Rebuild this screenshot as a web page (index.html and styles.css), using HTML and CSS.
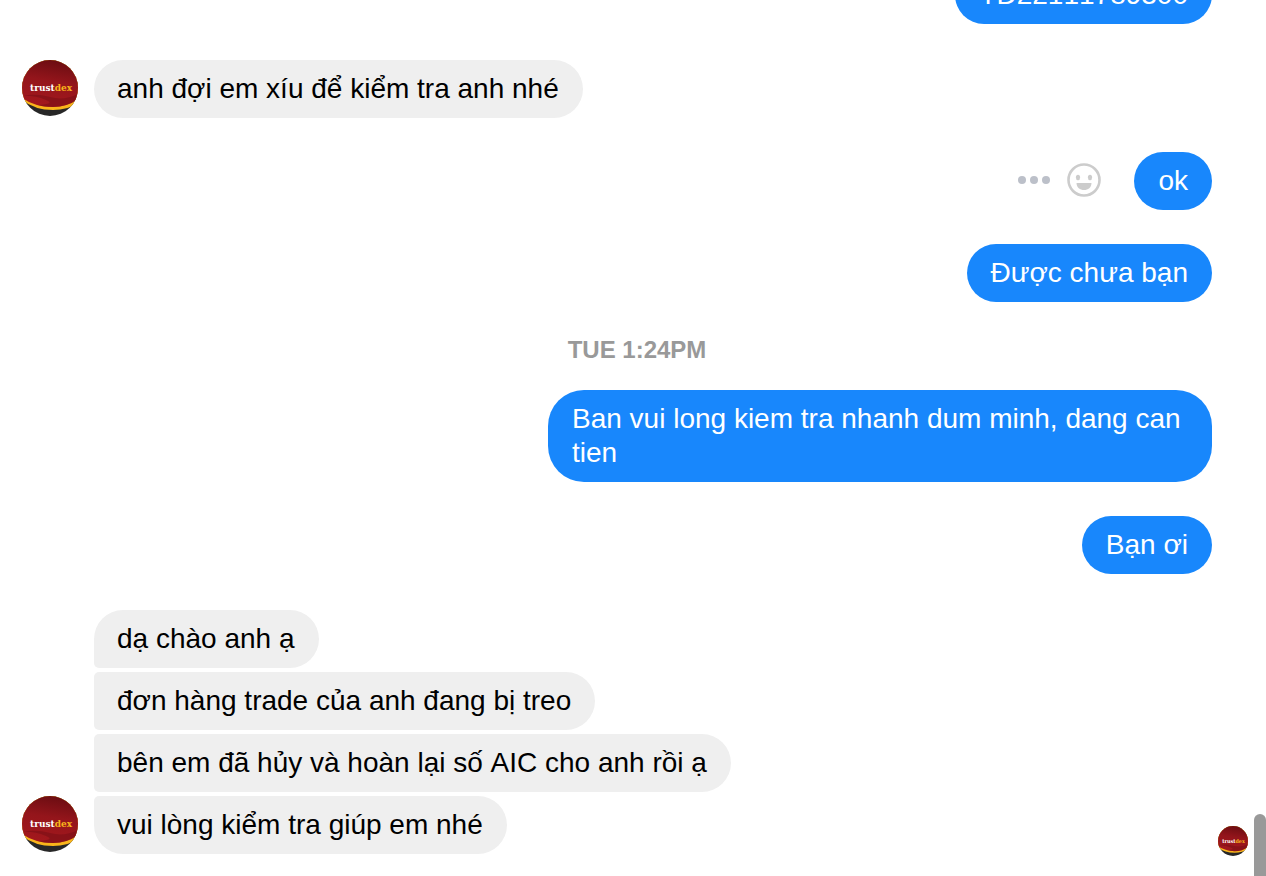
FILE: index.html
```html
<!DOCTYPE html>
<html lang="vi">
<head>
    <meta charset="UTF-8">
    <meta name="viewport" content="width=device-width, initial-scale=1.0">
    <title>Chat</title>
    <link rel="stylesheet" href="styles.css">
</head>
<body>
    <!-- Shared avatar drawing -->
    <svg class="defs" width="0" height="0" aria-hidden="true">
        <defs>
            <linearGradient id="red" x1="0.6" y1="0" x2="0.4" y2="1">
                <stop offset="0" stop-color="#6b0d12"/>
                <stop offset="0.45" stop-color="#94151b"/>
                <stop offset="1" stop-color="#a3181d"/>
            </linearGradient>
            <clipPath id="round"><circle cx="28" cy="28" r="28"/></clipPath>
            <symbol id="avatar" viewBox="0 0 56 56">
                <g clip-path="url(#round)">
                    <rect width="56" height="56" fill="#272727"/>
                    <path d="M0 0H56V43Q46 50 31 50Q13 50 0 40Z" fill="#f9b51b"/>
                    <path d="M0 0H56V39Q45 47 31 47Q13 47 0 38Z" fill="url(#red)"/>
                    <path d="M0 36Q14 33 28 37Q42 41 56 34V39Q45 47 31 47Q22 47 16 45Q34 44 24 40Q12 35 0 36Z" fill="#7a0f15" opacity="0.6"/>
                    <text x="8" y="31" class="brand">trust<tspan class="brand-dex">dex</tspan></text>
                </g>
            </symbol>
        </defs>
    </svg>

    <main class="chat">
        <div class="row mine">
            <p class="bubble">TD22111789300</p>
        </div>

        <div class="row theirs new-sender">
            <svg class="avatar" role="img" aria-label="trustdex"><use href="#avatar"/></svg>
            <p class="bubble">anh đợi em xíu để kiểm tra anh nhé</p>
        </div>

        <div class="row mine">
            <div class="actions">
                <button class="action" type="button" aria-label="More">
                    <svg width="34" height="34" viewBox="0 0 34 34" fill="#bcc0c9">
                        <circle cx="5" cy="17" r="4"/>
                        <circle cx="17" cy="17" r="4"/>
                        <circle cx="29" cy="17" r="4"/>
                    </svg>
                </button>
                <button class="action" type="button" aria-label="React">
                    <svg width="34" height="34" viewBox="0 0 34 34" fill="#cccccc">
                        <circle cx="17" cy="17" r="15.5" fill="none" stroke="#cccccc" stroke-width="2.6"/>
                        <ellipse cx="11" cy="14.5" rx="2.1" ry="2.7"/>
                        <ellipse cx="23" cy="14.5" rx="2.1" ry="2.7"/>
                        <path d="M9.5 20H24.5C24.5 24.5 21 27 17 27S9.5 24.5 9.5 20Z"/>
                    </svg>
                </button>
            </div>
            <p class="bubble">ok</p>
        </div>

        <div class="row mine">
            <p class="bubble">Được chưa bạn</p>
        </div>

        <time class="timestamp">TUE 1:24PM</time>

        <div class="row mine">
            <p class="bubble">Ban vui long kiem tra nhanh dum minh, dang can tien</p>
        </div>

        <div class="row mine">
            <p class="bubble">Bạn ơi</p>
        </div>

        <div class="row theirs new-sender">
            <svg class="avatar" role="img" aria-label="trustdex"><use href="#avatar"/></svg>
            <div class="group">
                <p class="bubble">dạ chào anh ạ</p>
                <p class="bubble">đơn hàng trade của anh đang bị treo</p>
                <p class="bubble">bên em đã hủy và hoàn lại số AIC cho anh rồi ạ</p>
                <p class="bubble">vui lòng kiểm tra giúp em nhé</p>
            </div>
            <svg class="seen" role="img" aria-label="Seen by trustdex"><use href="#avatar"/></svg>
        </div>
    </main>
    <div class="scroll-thumb"></div>
</body>
</html>
```

FILE: styles.css
```css
* {
    box-sizing: border-box;
}

body {
    margin: 0;
    height: 100vh;
    overflow: hidden;
    background-color: white;
    color: black;
    font-family: "Liberation Sans", Arial, sans-serif;
    font-size: 28px;
    line-height: 34px;
    font-kerning: none;
}

.defs {
    position: absolute;
}

/* Newest message stays at the bottom, older ones run off the top */
.chat {
    height: 100%;
    display: flex;
    flex-direction: column;
    justify-content: flex-end;
    padding: 0 18px 22px 22px;
}

.row {
    display: flex;
    flex-shrink: 0;
    align-items: flex-end;
    margin-top: 34px;
}

.new-sender {
    margin-top: 36px;
}

.mine {
    justify-content: flex-end;
    align-items: center;
    padding-right: 36px;
}

.theirs {
    gap: 16px;
}

.bubble {
    margin: 0;
    padding: 12px 24px;
    border-radius: 36px;
    background-color: #efefef;
    overflow-wrap: break-word;
}

.mine .bubble {
    max-width: 664px;
    background-color: #1887fc;
    color: white;
}

.theirs .bubble {
    padding: 12px 24px 12px 23px;
}

.group {
    display: flex;
    flex-direction: column;
    align-items: flex-start;
    gap: 4px;
}

.group .bubble {
    border-radius: 5px 29px 29px 5px;
}

.group .bubble:first-child {
    border-top-left-radius: 29px;
}

.group .bubble:last-child {
    border-bottom-left-radius: 29px;
}

.avatar {
    width: 56px;
    height: 56px;
    flex-shrink: 0;
    margin-bottom: 2px;
}

.seen {
    width: 30px;
    height: 30px;
    flex-shrink: 0;
    margin-left: auto;
    margin-bottom: -2px;
}

.brand {
    font-family: "DejaVu Serif Condensed", "DejaVu Serif", serif;
    font-size: 10px;
    font-weight: bold;
    fill: white;
}

.brand-dex {
    fill: #f9b51b;
}

.actions {
    display: flex;
    gap: 16px;
    margin-right: 33px;
    padding-bottom: 2px;
}

.action {
    display: flex;
    padding: 0;
    border: none;
    background: none;
    cursor: pointer;
}

.timestamp {
    flex-shrink: 0;
    margin-top: 33px;
    margin-bottom: -9px;
    padding-left: 4px;
    text-align: center;
    color: #999999;
    font-size: 24px;
    font-weight: bold;
    line-height: 30px;
}

/* Thumb floats over the right edge of the window */
.scroll-thumb {
    position: absolute;
    right: 0;
    bottom: 0;
    width: 12px;
    height: 62px;
    border-radius: 6px 6px 0 0;
    background-color: #999999;
}
```
